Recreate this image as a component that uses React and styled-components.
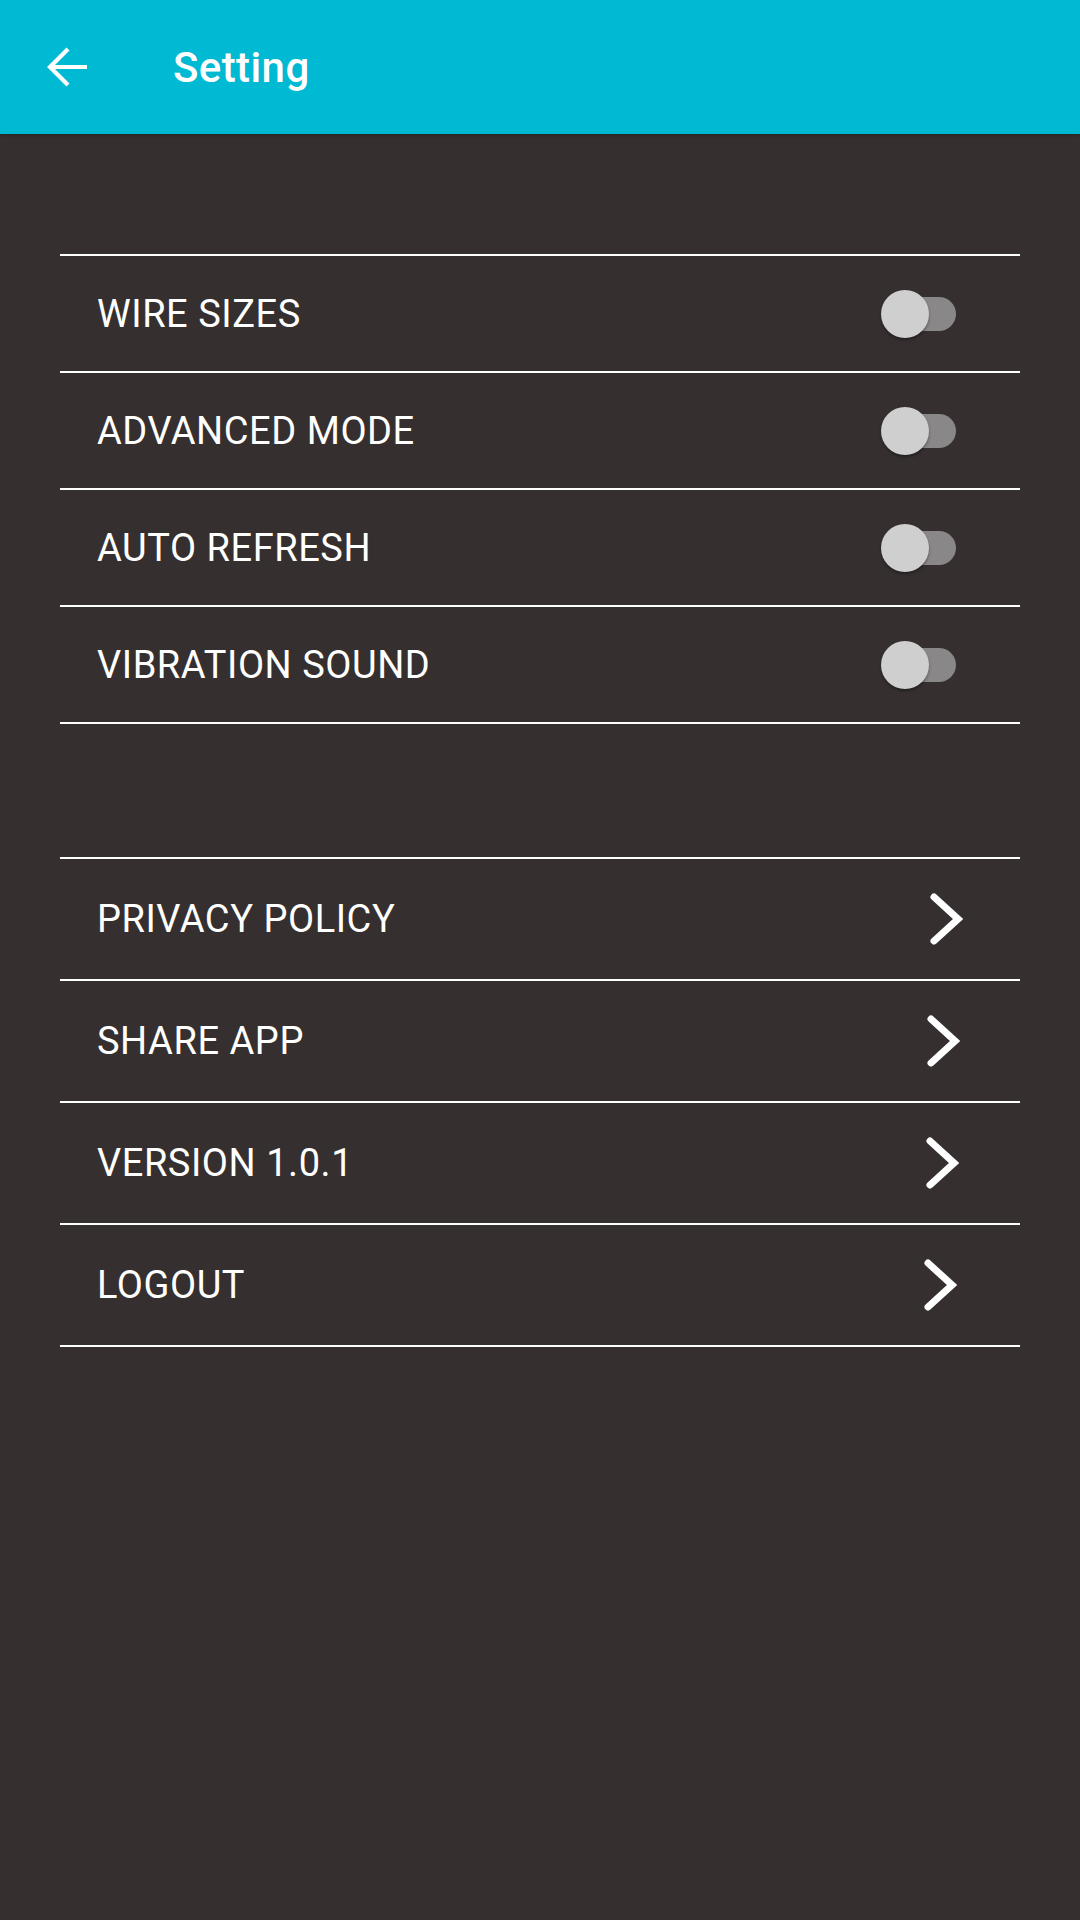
import React, { useState } from "react";
import styled, { createGlobalStyle } from "styled-components";

const GlobalStyle = createGlobalStyle`
  html, body {
    margin: 0;
    padding: 0;
    background: #352f30;
  }
  * {
    box-sizing: border-box;
  }
`;

const Page = styled.div`
  width: 1080px;
  min-height: 1920px;
  background: #352f30;
  font-family: Roboto, "Noto Sans", sans-serif;
  color: #fff;
`;

const Header = styled.header`
  height: 134px;
  background: #00b9d3;
  display: flex;
  align-items: center;
  padding-left: 47px;
  box-shadow: 0 1px 3px rgba(0, 0, 0, 0.25);
`;

const BackButton = styled.button`
  width: 42px;
  height: 42px;
  padding: 0;
  border: none;
  background: transparent;
  display: flex;
  align-items: center;
  justify-content: center;
  cursor: pointer;
`;

const Title = styled.h1`
  margin: 0 0 0 84px;
  font-size: 42px;
  font-weight: 500;
  color: #fff;
  letter-spacing: 0.4px;
`;

const Content = styled.main`
  padding: 120px 60px 0;
`;

const Group = styled.section`
  border-top: 2px solid #fff;
  margin-top: ${(p) => p.$gap || 0}px;
`;

const Row = styled.div`
  height: ${(p) => p.$height}px;
  border-bottom: 2px solid #fff;
  display: flex;
  align-items: center;
  justify-content: space-between;
  padding-left: 37px;
  padding-right: ${(p) => p.$right}px;
  cursor: pointer;
`;

const Label = styled.span`
  font-size: 38px;
  font-weight: 400;
  color: #fff;
  letter-spacing: 0.55px;
`;

const SwitchTrack = styled.div`
  position: relative;
  width: 74px;
  height: 34px;
  border-radius: 17px;
  background: ${(p) => (p.$on ? "#7fdceb" : "#8a8788")};
`;

const SwitchThumb = styled.div`
  position: absolute;
  top: -7px;
  left: ${(p) => (p.$on ? "30px" : "-1px")};
  width: 48px;
  height: 48px;
  border-radius: 50%;
  background: ${(p) => (p.$on ? "#00b9d3" : "#d0cfcf")};
  box-shadow: 0 2px 3px rgba(0, 0, 0, 0.35);
  transition: left 0.2s;
`;

const Chevron = () => (
  <svg width="34" height="54" viewBox="0 0 34 54">
    <polyline
      points="5,5 29,27 5,49"
      fill="none"
      stroke="#fff"
      strokeWidth="7"
      strokeLinecap="round"
      strokeLinejoin="miter"
    />
  </svg>
);

const BackArrow = () => (
  <svg width="42" height="42" viewBox="0 0 42 42">
    <g fill="none" stroke="#fff" strokeWidth="4.2" strokeLinecap="butt">
      <line x1="4" y1="21" x2="40" y2="21" />
      <polyline points="21,3 3,21 21,39" strokeLinejoin="miter" />
    </g>
  </svg>
);

const toggles = ["WIRE SIZES", "ADVANCED MODE", "AUTO REFRESH", "VIBRATION SOUND"];

const links = [
  { label: "PRIVACY POLICY", right: 57 },
  { label: "SHARE APP", right: 60 },
  { label: "VERSION 1.0.1", right: 61 },
  { label: "LOGOUT", right: 63 },
];

export default function App() {
  const [on, setOn] = useState({});

  return (
    <Page>
      <GlobalStyle />
      <Header>
        <BackButton aria-label="Back">
          <BackArrow />
        </BackButton>
        <Title>Setting</Title>
      </Header>
      <Content>
        <Group>
          {toggles.map((t) => (
            <Row
              key={t}
              $height={117}
              $right={64}
              onClick={() => setOn({ ...on, [t]: !on[t] })}
            >
              <Label>{t}</Label>
              <SwitchTrack $on={on[t]}>
                <SwitchThumb $on={on[t]} />
              </SwitchTrack>
            </Row>
          ))}
        </Group>
        <Group $gap={133}>
          {links.map((l) => (
            <Row key={l.label} $height={122} $right={l.right}>
              <Label>{l.label}</Label>
              <Chevron />
            </Row>
          ))}
        </Group>
      </Content>
    </Page>
  );
}
